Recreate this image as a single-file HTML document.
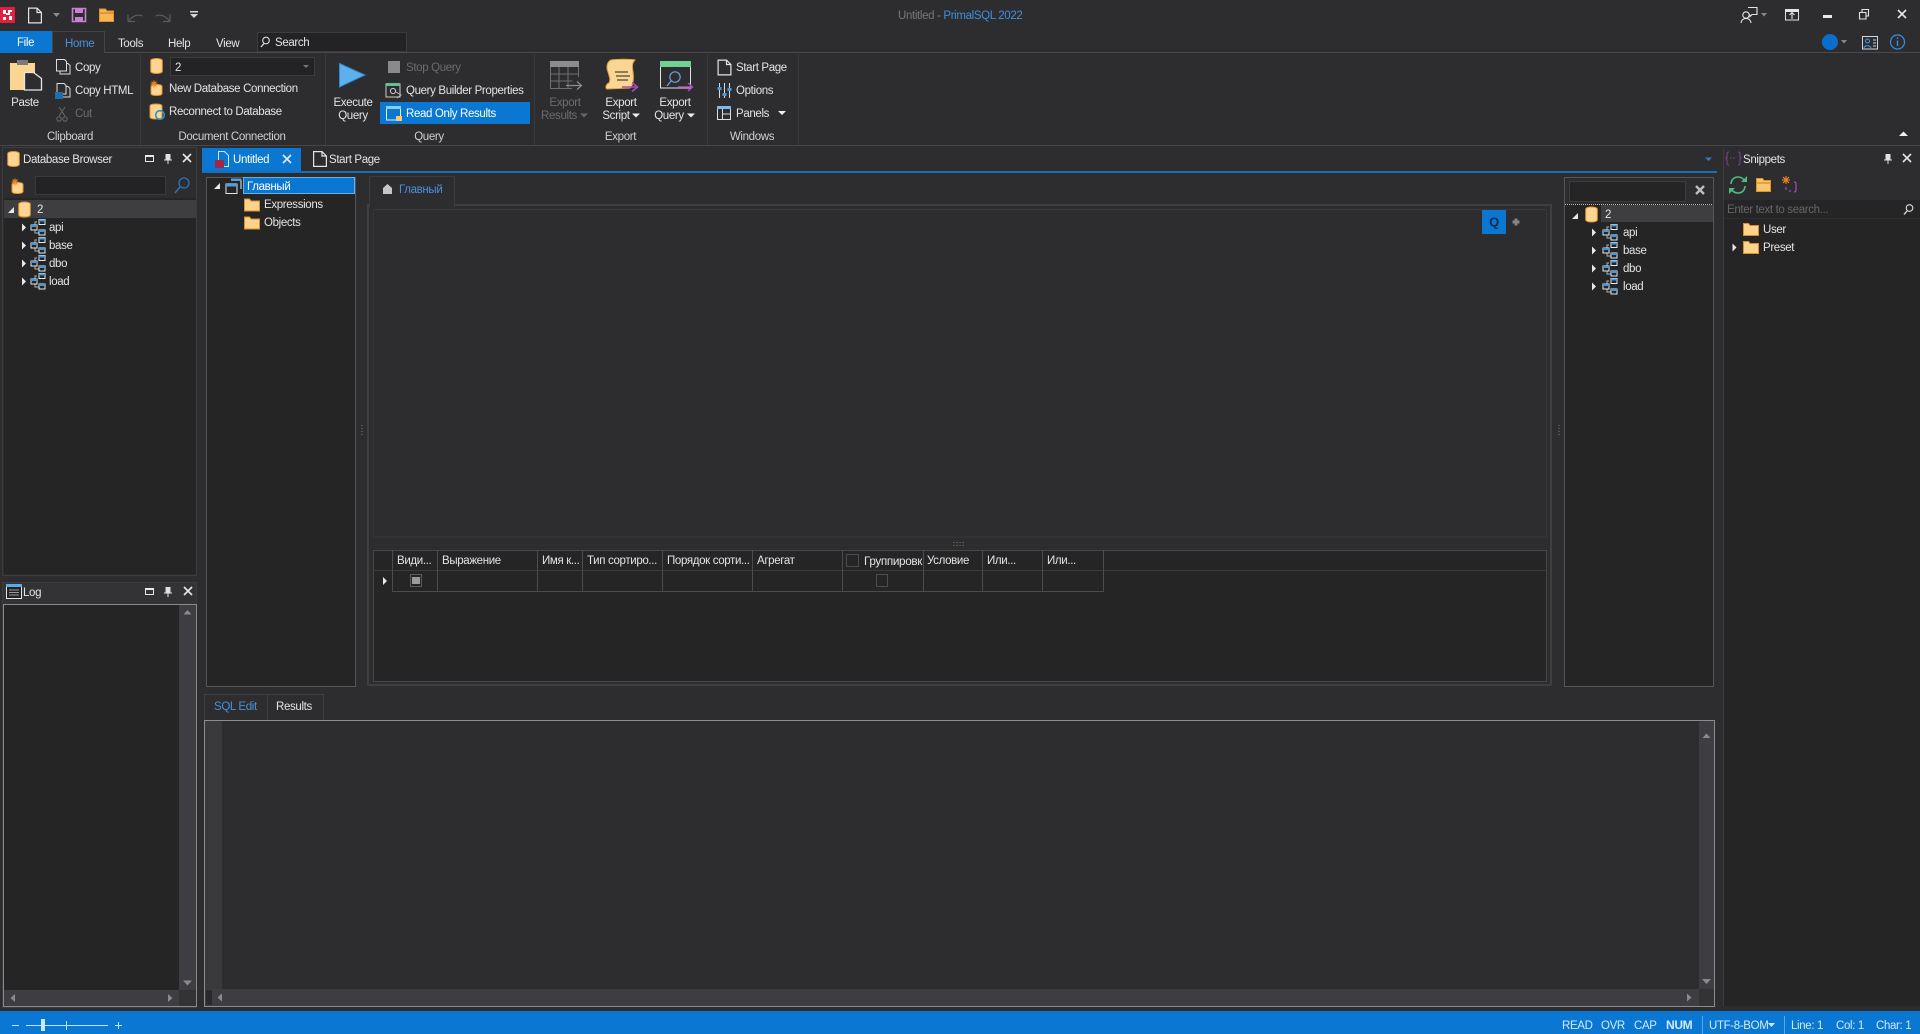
<!DOCTYPE html>
<html><head><meta charset="utf-8"><title>Untitled - PrimalSQL 2022</title>
<style>
html,body{margin:0;padding:0;background:#2d2d30;overflow:hidden}
svg{display:block;position:absolute;left:0;top:0}
text{font-family:"Liberation Sans","Noto Sans CJK SC",sans-serif;font-size:11.5px;letter-spacing:-.35px;fill:#e4e4e4;white-space:pre}
.d{fill:#6c6c6e}.b{fill:#4a90d9}.g{fill:#cfcfcf}.w{fill:#fff}.s{fill:#d4e8f8}
.c{text-anchor:middle}
rect{shape-rendering:crispEdges}
</style></head><body>
<svg width="1920" height="1034" viewBox="0 0 1920 1034" xmlns="http://www.w3.org/2000/svg">
<defs>
<g id="db"><path d="M.7 2.6C.7 1.3 3.4.5 6.5.5s5.8.8 5.8 2.1v10.8c0 1.3-2.7 2.1-5.8 2.1S.7 14.7.7 13.4z" fill="#fcd592" stroke="#e2912f"/></g>
<g id="folder"><path d="M.5 13.5V1.5h5l1.500 2h8.500v10z" fill="#fcd38a" stroke="#d98f33"/></g>
<g id="schema" fill="none" stroke-width="1.200"><path d="M7 3H5v3M5 11v3h4" stroke="#999"/><rect x="1" y="6" width="6" height="5" stroke="#e8e8e8"/><rect x="1" y="6" width="6" height="2" fill="#3c9be8" stroke="none"/><rect x="9" y="0.500" width="6" height="5" stroke="#e8e8e8"/><rect x="9" y="0.500" width="6" height="2" fill="#3c9be8" stroke="none"/><rect x="9" y="11" width="6" height="5" stroke="#e8e8e8"/><rect x="9" y="11" width="6" height="2" fill="#3c9be8" stroke="none"/></g>
<path id="ar" d="M0-4 4 0 0 4z" fill="#e8e8e8"/>
<path id="ad" d="M3-3V3H-3z" fill="#e8e8e8"/>
<g id="doc" fill="none" stroke="#e4e4e4" stroke-width="1.200"><path d="M.6.600H9l4.400 4.400V15.400H.6zM9 .6V5h4.400"/></g>
<g id="x"><path d="M-4-4 4 4M4-4-4 4" stroke="#e8e8e8" stroke-width="1.600" fill="none"/></g>
<g id="max" fill="none" stroke="#e8e8e8"><rect x="0.500" y="0.500" width="8" height="6"/><rect x="0" y="0" width="9" height="2" fill="#e8e8e8" stroke="none"/></g>
<g id="pin"><path d="M-2.500-4H2.500V1.500H4V2.500H.5V6H-.5V2.500H-4V1.500H-2.500z" fill="#e0e0e0"/></g>
<g id="newdb"><path d="M2 6.500C2 5 5 4.500 7.500 4.500S13 5 13 6.500v7C13 15 10 15.500 7.500 15.500S2 15 2 13.500z" fill="#fcd592" stroke="#e2912f"/><path d="M5 .5v7M1.500 4h7M2.500 1.500l5 5M7.500 1.500l-5 5" stroke="#f0891d" stroke-width="1.100"/></g>
</defs>

<rect width="1920" height="1034" fill="#2d2d30"/>

<!-- quick toolbar -->
<rect x="0" y="7" width="15" height="16" fill="#e0203f"/>
<path d="M3 10h3v3h2v-3h4v2H10v3H6v-1H3zM3 17h3v3H3zM9 16h3v4H9z" fill="#fff"/>
<use href="#doc" x="28" y="7.500"/>
<path d="M53 13h7l-3.500 4z" fill="#8a8a8a"/>
<path d="M72.500 8.500h13v13h-13z" fill="none" stroke="#c681d2" stroke-width="1.600"/>
<rect x="75" y="8" width="8" height="5" fill="#c681d2"/><rect x="75" y="17" width="8" height="5" fill="#c681d2"/>
<path d="M99.500 21.500V9h6l1.500 2h6.500v10.500z" fill="#f8b657" stroke="#e39222"/>
<path d="M100 13h14" stroke="#c97a14"/>
<path d="M128 21.500V14.500M128 21.500h7M128.500 21c4-5 9-7 14-5" fill="none" stroke="#5a5a5c" stroke-width="1.200"/>
<path d="M170 21.500V14.500M170 21.500h-7M169.500 21c-4-5-9-7-14-5" fill="none" stroke="#5a5a5c" stroke-width="1.200"/>
<rect x="190" y="11" width="8" height="1.500" fill="#d8d8d8"/><path d="M190 14h8l-4 4z" fill="#d8d8d8"/>
<text x="898" y="19" style="fill:#777">Untitled <tspan style="fill:#3f8fdc">- PrimalSQL 2022</tspan></text>

<!-- window buttons -->
<g fill="none" stroke="#e4e4e4" stroke-width="1.100">
<circle cx="1746" cy="15" r="3.200"/><path d="M1741 23c.5-3.500 2.500-4.500 5-4.500s4.500 1 5 4.500"/>
<path d="M1748 7.500h9v7h-5l-2 2v-2"/>
<rect x="1785.500" y="9.500" width="13" height="10.500"/><rect x="1785.500" y="9.500" width="13" height="2" fill="#e4e4e4"/><path d="M1792 19v-6M1789.500 15l2.500-2.500 2.500 2.500"/>
<path d="M1859.500 12.500h6.500v6.500h-6.500zM1862 12.500V9.500h6.500v6.500H1866"/>
</g>
<path d="M1761 13h6l-3 3.500z" fill="#888"/>
<rect x="1823" y="15" width="9" height="3" fill="#e8e8e8"/>
<use href="#x" x="1902" y="14"/>

<!-- ribbon tabs -->
<rect x="0" y="52" width="1920" height="1" fill="#4a4a4d"/>
<rect x="0" y="31" width="52" height="22" fill="#0a78d2"/>
<text class="w" x="17" y="46">File</text>
<path d="M52.500 53V31.500H104.500V53" fill="#2d2d30" stroke="#444447"/>
<rect x="53" y="51" width="51" height="3" fill="#2d2d30"/>
<text class="b" x="65" y="47">Home</text>
<text x="118" y="47">Tools</text><text x="168" y="47">Help</text><text x="216" y="47">View</text>
<rect x="257.500" y="32.500" width="149" height="19" fill="#232325" stroke="#3c3c3e"/>
<circle cx="266" cy="40.500" r="3.300" fill="none" stroke="#ddd" stroke-width="1.100"/><path d="M264 43.500l-3 3.500" stroke="#ddd" stroke-width="1.300"/>
<text x="275" y="46">Search</text>
<circle cx="1830" cy="42" r="8" fill="#0a6fcb"/><path d="M1841 40h6l-3 3.500z" fill="#888"/>
<g fill="none" stroke="#c8d8e8"><rect x="1862.500" y="36.500" width="15" height="12.500"/><circle cx="1867.500" cy="41" r="2" stroke="#4a9ae0"/><path d="M1864 48c.5-3 6-3 7 0" stroke="#4a9ae0"/><path d="M1873 40h3M1873 43h3M1873 46h3"/></g>
<circle cx="1897.500" cy="42" r="7" fill="none" stroke="#3b8fdc" stroke-width="1.200"/><path d="M1897.500 40.500v5.500M1897.500 37.500v1.500" stroke="#3b8fdc" stroke-width="1.400"/>

<!-- ribbon -->
<rect x="0" y="145" width="1920" height="1" fill="#46464a"/>
<g fill="#3a3a3d"><rect x="140" y="54" width="1" height="91"/><rect x="325" y="54" width="1" height="91"/><rect x="534" y="54" width="1" height="91"/><rect x="707" y="54" width="1" height="91"/><rect x="798" y="54" width="1" height="91"/></g>
<!-- clipboard -->
<rect x="10" y="63" width="25" height="27" fill="#fbd592"/><rect x="17" y="60" width="11" height="5" fill="#7a7a7a"/>
<path d="M24.500 72.500h9l8 6v11.500h-17z" fill="#2d2d30" stroke="#e6e6e6" stroke-width="1.300"/>
<text class="c" x="25" y="106">Paste</text>
<path d="M60 63.500h8l2 2V74h-10z" fill="#2d2d30" stroke="#ddd"/><path d="M56.500 59.500h8l2 2V71h-10z" fill="#2d2d30" stroke="#ddd"/>
<text x="75" y="71">Copy</text>
<path d="M60 86.500h8l2 2V97h-10z" fill="#2d2d30" stroke="#ddd"/><path d="M57 83.500h7l2 2V94h-9z" fill="#2d2d30" stroke="#ddd"/><rect x="55" y="92" width="8" height="7" fill="#1f6eb0"/>
<text x="75" y="94">Copy HTML</text>
<g fill="none" stroke="#666" stroke-width="1.100"><path d="M59 107l6 9M65 107l-6 9"/><circle cx="59" cy="119" r="2.200"/><circle cx="65" cy="119" r="2.200"/></g>
<text class="d" x="75" y="117">Cut</text>
<text class="g c" x="70" y="140">Clipboard</text>
<!-- connection -->
<use href="#db" x="150" y="58"/>
<rect x="170.500" y="57.500" width="144" height="18" fill="#232325" stroke="#3c3c3e"/>
<text x="175" y="71">2</text>
<path d="M303 65h6l-3 3z" fill="#777"/>
<use href="#newdb" x="149" y="80"/><text x="169" y="92">New Database Connection</text>
<path d="M150 106c0-1.500 3-2 6-2s6 .5 6 2v11c0 1.500-3 2-6 2s-6-.5-6-2z" fill="#fcd592" stroke="#e2912f"/><circle cx="160" cy="115" r="4.300" fill="none" stroke="#2d8fd8" stroke-width="1.600"/>
<text x="169" y="115">Reconnect to Database</text>
<text class="g c" x="232" y="140">Document Connection</text>
<!-- query -->
<path d="M339.500 63.500 365 75 339.500 87z" fill="#5cb0ec" stroke="#2f8ad0"/>
<text class="c" x="353" y="106">Execute</text><text class="c" x="353" y="119">Query</text>
<rect x="388" y="61" width="12" height="12" fill="#8a8a8a"/>
<text class="d" x="406" y="71">Stop Query</text>
<rect x="386" y="84" width="14" height="13" fill="none" stroke="#ccc"/><rect x="386" y="83" width="14" height="3" fill="#62c28f"/><circle cx="393" cy="91" r="2.600" fill="none" stroke="#ccc"/><path d="M396 92l5 3-4 3" fill="none" stroke="#bbb"/>
<text x="406" y="94">Query Builder Properties</text>
<rect x="380" y="102" width="150" height="22" fill="#0a78d2"/>
<rect x="386.500" y="107" width="14" height="13" fill="none" stroke="#e4f0fa"/><rect x="386" y="106" width="15" height="3" fill="#8fc9f4"/><rect x="396" y="116" width="6" height="5" fill="#fcc96a"/>
<text class="w" x="406" y="117">Read Only Results</text>
<text class="g c" x="429" y="140">Query</text>
<!-- export -->
<rect x="550" y="61" width="29" height="6" fill="#8c8c8c"/>
<path d="M550.500 67v21.500H572M550.500 74h28M550.500 81h22M559 67v21M568 67v21M578.500 67v10" stroke="#6e6e6e" fill="none"/>
<path d="M566 85.500h15M577 81.500l4.500 4-4.500 4" fill="none" stroke="#8c8c8c" stroke-width="1.200"/>
<text class="d c" x="565" y="106">Export</text><text class="d c" x="559" y="119">Results</text><path d="M580 113.500h8l-4 4z" fill="#666"/>
<path d="M611 60c6-1 20-1 24 0-3 3-3 6-2 12 1 7 0 14-3 16l-23 1c-2-1-1-5 2-6 2-4 0-7-1-11-2-5-1-10 3-12z" fill="#fbd592" stroke="#e0a33e"/>
<path d="M615 72h13M616 76h14M617 80h11" stroke="#222" stroke-width="1.100"/>
<path d="M622 87h15M632 82.500l5.500 4.500-5.500 4.500" fill="none" stroke="#a64ec0" stroke-width="1.500"/>
<text class="c" x="621" y="106">Export</text><text class="c" x="616" y="119">Script</text><path d="M632 113.500h8l-4 4z" fill="#eee"/>
<rect x="660.500" y="62" width="30" height="26" fill="none" stroke="#e4e4e4"/><rect x="660" y="61" width="31" height="6" fill="#6fd194"/>
<circle cx="675" cy="77" r="5.200" fill="none" stroke="#6fa0d4" stroke-width="1.200"/><path d="M671 81l-4 5" stroke="#6fa0d4" stroke-width="1.300"/>
<path d="M678 87h14M688 83l4.500 4-4.500 4" fill="none" stroke="#a64ec0" stroke-width="1.400"/>
<text class="c" x="675" y="106">Export</text><text class="c" x="669" y="119">Query</text><path d="M687 113.500h8l-4 4z" fill="#eee"/>
<text class="g c" x="620.500" y="140">Export</text>
<!-- windows -->
<use href="#doc" x="717.500" y="59.500"/><text x="736" y="71">Start Page</text>
<g fill="none" stroke="#ddd"><path d="M719.500 83v15M724.500 83v15M729.500 83v15"/></g><g fill="#3f9ae4"><rect x="717.500" y="87" width="4" height="3"/><rect x="722.500" y="93" width="4" height="3"/><rect x="727.500" y="88" width="4" height="3"/></g>
<text x="736" y="94">Options</text>
<rect x="717.500" y="107.500" width="13" height="12" fill="none" stroke="#ddd"/><rect x="717" y="106" width="14" height="3" fill="#7fb7e8"/><path d="M722.500 109v11M722.500 114h8" stroke="#ddd" fill="none"/>
<text x="736" y="117">Panels</text><path d="M778 111h8l-4 4z" fill="#eee"/>
<text class="g c" x="752" y="140">Windows</text>
<path d="M1899 136h9l-4.500-4.500z" fill="#f0f0f0"/>

<!-- Database browser panel -->
<rect x="2.500" y="147.500" width="194" height="428" fill="#2d2d30" stroke="#3c3c3f"/>
<use href="#db" transform="translate(7 151)"/>
<text x="23" y="163">Database Browser</text>
<use href="#max" x="145" y="155"/><use href="#pin" x="168" y="158"/><use href="#x" x="187" y="158"/>
<use href="#newdb" x="10" y="178"/>
<rect x="35.500" y="176.500" width="130" height="18" fill="#232325" stroke="#3a3a3c"/>
<circle cx="184" cy="183" r="5" fill="none" stroke="#2b74b8" stroke-width="1.300"/><path d="M180 187l-5 6" stroke="#2b74b8" stroke-width="1.500"/>
<rect x="4" y="198" width="192" height="376" fill="#252526"/>
<rect x="4" y="200" width="192" height="18" fill="#3e3e40"/>
<use href="#ad" x="11" y="210"/><use href="#db" x="18" y="201.500"/><text x="37" y="213">2</text>
<use href="#ar" x="22" y="227.500"/><use href="#schema" x="30" y="219"/><text x="49" y="231">api</text>
<use href="#ar" x="22" y="245.500"/><use href="#schema" x="30" y="237"/><text x="49" y="249">base</text>
<use href="#ar" x="22" y="263.500"/><use href="#schema" x="30" y="255"/><text x="49" y="267">dbo</text>
<use href="#ar" x="22" y="281.500"/><use href="#schema" x="30" y="273"/><text x="49" y="285">load</text>

<!-- Log panel -->
<rect x="2.500" y="582.500" width="194" height="425" fill="#333336" stroke="#3c3c3f"/>
<rect x="6.500" y="586.500" width="15" height="12" fill="#222" stroke="#e4e4e4"/><rect x="6" y="584" width="16" height="3" fill="#56aaf0"/><path d="M9 590h10M9 592.500h10M9 595h10" stroke="#999"/>
<text x="23" y="596">Log</text>
<use href="#max" x="145" y="588"/><use href="#pin" x="168" y="591"/><use href="#x" x="188" y="591"/>
<rect x="3.500" y="604.500" width="193" height="402" fill="#252526" stroke="#8a8a8a"/>
<rect x="179" y="605" width="17" height="385" fill="#3e3e42"/>
<rect x="4" y="990" width="175" height="16" fill="#3e3e42"/>
<rect x="179" y="990" width="17" height="16" fill="#333336"/>
<path d="M183.500 614.500h8l-4-4.500z" fill="#8a8a8a"/><path d="M183 980.500h9l-4.500 5z" fill="#8a8a8a"/>
<path d="M15 994v8l-4.500-4z" fill="#8a8a8a"/><path d="M168 994v8l4.500-4z" fill="#8a8a8a"/>

<!-- Document tabs -->
<rect x="202" y="148" width="99" height="24" fill="#0a78d2"/>
<rect x="202" y="171" width="1515" height="2" fill="#1670b8"/>
<path d="M218.500 151.500h6l4 4v11h-10z" fill="#0a78d2" stroke="#cfe6f8"/><rect x="215" y="160" width="9" height="8" fill="#a3264a"/>
<text class="w" x="233" y="163">Untitled</text><use href="#x" x="287" y="159"/>
<use href="#doc" x="313" y="151"/><text x="329" y="163">Start Page</text>
<path d="M1705 157.500h7l-3.500 3.500z" fill="#2a7fd0"/>

<!-- object tree -->
<rect x="206.500" y="177.500" width="149" height="509" fill="#252526" stroke="#565658"/>
<use href="#ad" x="217" y="186"/>
<g fill="none" stroke="#e4e4e4" stroke-width="1.100"><rect x="226" y="184" width="11" height="9.500" fill="#252526"/><path d="M231 180h10v9"/></g><rect x="231" y="178.500" width="10" height="2.500" fill="#4aa0e8"/><rect x="226" y="184" width="11" height="2.500" fill="#4aa0e8"/>
<rect x="243" y="177" width="112" height="17" fill="#0a78d2"/>
<rect x="243.500" y="177.500" width="111" height="16" fill="none" stroke="#cfe6f8" stroke-dasharray="1 1"/>
<text class="w" x="247" y="190">Главный</text>
<use href="#folder" x="244" y="197.500"/><text x="264" y="208">Expressions</text>
<use href="#folder" x="244" y="215.500"/><text x="264" y="226">Objects</text>

<!-- outer box -->
<path d="M368 205H1551V685H368z" fill="#2d2d30" stroke="#3f3f42" stroke-width="2"/>
<rect x="373.500" y="209.500" width="1173" height="327.500" fill="#2d2d30" stroke="#38383b"/>
<!-- designer tab -->
<path d="M369.500 207V176.500H454.500V207" fill="#2d2d30" stroke="#3c3c3f"/>
<path d="M383 194v-6l4.500-4 4.500 4v6z" fill="#c6c6c6"/>
<text class="b" x="399" y="193">Главный</text>
<rect x="1482" y="210" width="24" height="24" fill="#0a78d2"/>
<text x="1494" y="226.500" text-anchor="middle" style="font-size:13px;font-weight:bold;fill:#0c2a44">Q</text>
<path d="M1514.500 218.500h3v2h2v3h-2v2h-3v-2h-2v-3h2z" fill="#858585"/>
<g fill="#555"><rect x="953" y="542" width="2" height="1"/><rect x="956" y="542" width="2" height="1"/><rect x="959" y="542" width="2" height="1"/><rect x="962" y="542" width="2" height="1"/><rect x="953" y="545" width="2" height="1"/><rect x="956" y="545" width="2" height="1"/><rect x="959" y="545" width="2" height="1"/><rect x="962" y="545" width="2" height="1"/></g>
<g fill="#555"><rect x="361" y="425" width="2" height="1"/><rect x="361" y="428" width="2" height="1"/><rect x="361" y="431" width="2" height="1"/><rect x="361" y="434" width="2" height="1"/><rect x="1558" y="425" width="2" height="1"/><rect x="1558" y="428" width="2" height="1"/><rect x="1558" y="431" width="2" height="1"/><rect x="1558" y="434" width="2" height="1"/></g>

<!-- grid -->
<rect x="373.500" y="550.500" width="1173" height="131" fill="#252526" stroke="#464648"/>
<path d="M373 570.500H1546" stroke="#3c3c3e"/>
<path d="M392.500 550V591M437.500 550V591M537.500 550V591M582.500 550V591M662.500 550V591M752.500 550V591M842.500 550V591M923.500 550V591M982.500 550V591M1042.500 550V591M1103.500 550V591M392 591.500H1104" stroke="#4c4c4e" fill="none"/>
<text x="397" y="564">Види...</text><text x="442" y="564">Выражение</text><text x="542" y="564">Имя к...</text><text x="587" y="564">Тип сортиро...</text><text x="667" y="564">Порядок сорти...</text><text x="757" y="564">Агрегат</text>
<rect x="846.500" y="554.500" width="12" height="12" fill="none" stroke="#4c4c4e"/>
<text x="864" y="565" textLength="58" lengthAdjust="spacingAndGlyphs">Группировк</text>
<text x="927" y="564">Условие</text><text x="987" y="564">Или...</text><text x="1047" y="564">Или...</text>
<use href="#ar" x="383" y="581"/>
<rect x="410.500" y="574.500" width="11" height="12" fill="none" stroke="#5a5a5c"/><rect x="412" y="577" width="8" height="7" fill="#9a9a9a"/>
<rect x="876.500" y="574.500" width="11" height="12" fill="none" stroke="#4c4c4e"/>

<!-- right table tree -->
<rect x="1564.500" y="177.500" width="149" height="509" fill="#252526" stroke="#565658"/>
<rect x="1565" y="178" width="148" height="26" fill="#2d2d30"/>
<rect x="1569.500" y="181.500" width="116" height="20" fill="#252526" stroke="#3c3c3e"/>
<path d="M1696 186l8 8M1704 186l-8 8" stroke="#bdbdbd" stroke-width="2.400" fill="none"/>
<path d="M1565 204.500H1713" stroke="#bbb" stroke-dasharray="1 1"/>
<rect x="1601" y="205" width="112" height="17" fill="#3e3e40"/>
<use href="#ad" x="1575" y="216"/><use href="#db" x="1585" y="206.500"/><text x="1605" y="218">2</text>
<use href="#ar" x="1592" y="232.500"/><use href="#schema" x="1602" y="224"/><text x="1623" y="236">api</text>
<use href="#ar" x="1592" y="250.500"/><use href="#schema" x="1602" y="242"/><text x="1623" y="254">base</text>
<use href="#ar" x="1592" y="268.500"/><use href="#schema" x="1602" y="260"/><text x="1623" y="272">dbo</text>
<use href="#ar" x="1592" y="286.500"/><use href="#schema" x="1602" y="278"/><text x="1623" y="290">load</text>

<!-- bottom tabs / editor -->
<path d="M204.500 720V694.500H323.500V720M267.500 694.500V720" fill="none" stroke="#3f3f42"/>
<text class="b" x="214" y="710">SQL Edit</text><text x="276" y="710">Results</text>
<rect x="204.500" y="720.500" width="1510" height="286" fill="#2d2d30" stroke="#8c8c8c"/>
<rect x="205" y="721" width="17" height="268" fill="#3a3a3c"/>
<rect x="1699" y="721" width="15" height="268" fill="#3e3e42"/>
<rect x="205" y="989" width="1494" height="17" fill="#3e3e42"/>
<rect x="206" y="990" width="6" height="15" fill="#2a2a2c"/>
<rect x="1699" y="989" width="15" height="17" fill="#333336"/>
<path d="M1702.500 738h8l-4-4.500z" fill="#8a8a8a"/><path d="M1702 979h9l-4.500 5z" fill="#8a8a8a"/>
<path d="M222 993.500v8l-4.500-4z" fill="#8a8a8a"/><path d="M1687 993.500v8l4.500-4z" fill="#8a8a8a"/>

<!-- snippets panel -->
<rect x="1723" y="148" width="197" height="858" fill="#2d2d30"/>
<rect x="1723" y="148" width="1" height="858" fill="#3c3c3f"/>
<g fill="none" stroke="#7a3f90" stroke-width="1.100"><path d="M1729 152c-2 0-2 1-2 3v2l-1 1 1 1v3c0 2 0 3 2 3M1738 152c2 0 2 1 2 3v2l1 1-1 1v3c0 2 0 3-2 3"/><path d="M1730 158h6" stroke-dasharray="1.500 1.500"/></g>
<text x="1743" y="163">Snippets</text>
<use href="#pin" x="1888" y="158"/><use href="#x" x="1907" y="158"/>
<g fill="none" stroke-width="1.600"><path d="M1731 184c0-4 3-7 7-7 3 0 5 1 7 4" stroke="#4dba7e"/><path d="M1745 186c0 4-3 7-7 7-3 0-5-1-7-4" stroke="#4dba7e"/></g><path d="M1741 182h6v-6zM1735 188h-6v6z" fill="#4dba7e"/>
<path d="M1756.500 191.500V178.500h6l1.500 2h6.500v11z" fill="#f8c871" stroke="#e39222"/><path d="M1757 183h13" stroke="#c97a14"/>
<path d="M1786 176v8M1782 180h8M1783 177l6 6M1789 177l-6 6" stroke="#f0891d" stroke-width="1.100"/>
<path d="M1794 182c2 0 2 1 2 2v6c0 1 0 2-2 2M1786 187v3M1790 190v2" stroke="#a64ec0" fill="none" stroke-width="1.200"/>
<rect x="1724" y="200" width="196" height="18" fill="#252526"/>
<text x="1727" y="213" style="fill:#666">Enter text to search...</text>
<circle cx="1909.500" cy="208" r="3.300" fill="none" stroke="#ddd" stroke-width="1.100"/><path d="M1907 211l-3 3.500" stroke="#ddd" stroke-width="1.300"/>
<rect x="1724" y="219" width="196" height="787" fill="#252526"/>
<use href="#folder" x="1743" y="222"/><text x="1763" y="233">User</text>
<use href="#ar" x="1732.500" y="247.500"/><use href="#folder" x="1743" y="240"/><text x="1763" y="251">Preset</text>

<!-- status bar -->
<rect x="0" y="1011" width="1920" height="23" fill="#0a78d2"/>
<g stroke="#bfe6ff" fill="none"><path d="M12 1025.500h7M26 1025.500h82M66.500 1021v9M115 1025.500h7M118.500 1022v7"/></g>
<rect x="41" y="1019" width="4" height="12" fill="#c8ecff"/>
<text class="s" x="1562" y="1029">READ</text><text class="s" x="1601" y="1029">OVR</text><text class="s" x="1634" y="1029">CAP</text>
<text class="s" x="1666" y="1029" style="font-weight:bold;font-size:12px">NUM</text>
<rect x="1702" y="1016" width="1" height="18" fill="#5aa9e2"/>
<text class="s" x="1709" y="1029">UTF-8-BOM</text><path d="M1768 1023h7l-3.500 4z" fill="#d4e8f8"/>
<rect x="1784" y="1016" width="1" height="18" fill="#5aa9e2"/>
<text class="s" x="1791" y="1029">Line: 1</text><text class="s" x="1836" y="1029">Col: 1</text><text class="s" x="1876" y="1029">Char: 1</text>
</svg>
</body></html>
